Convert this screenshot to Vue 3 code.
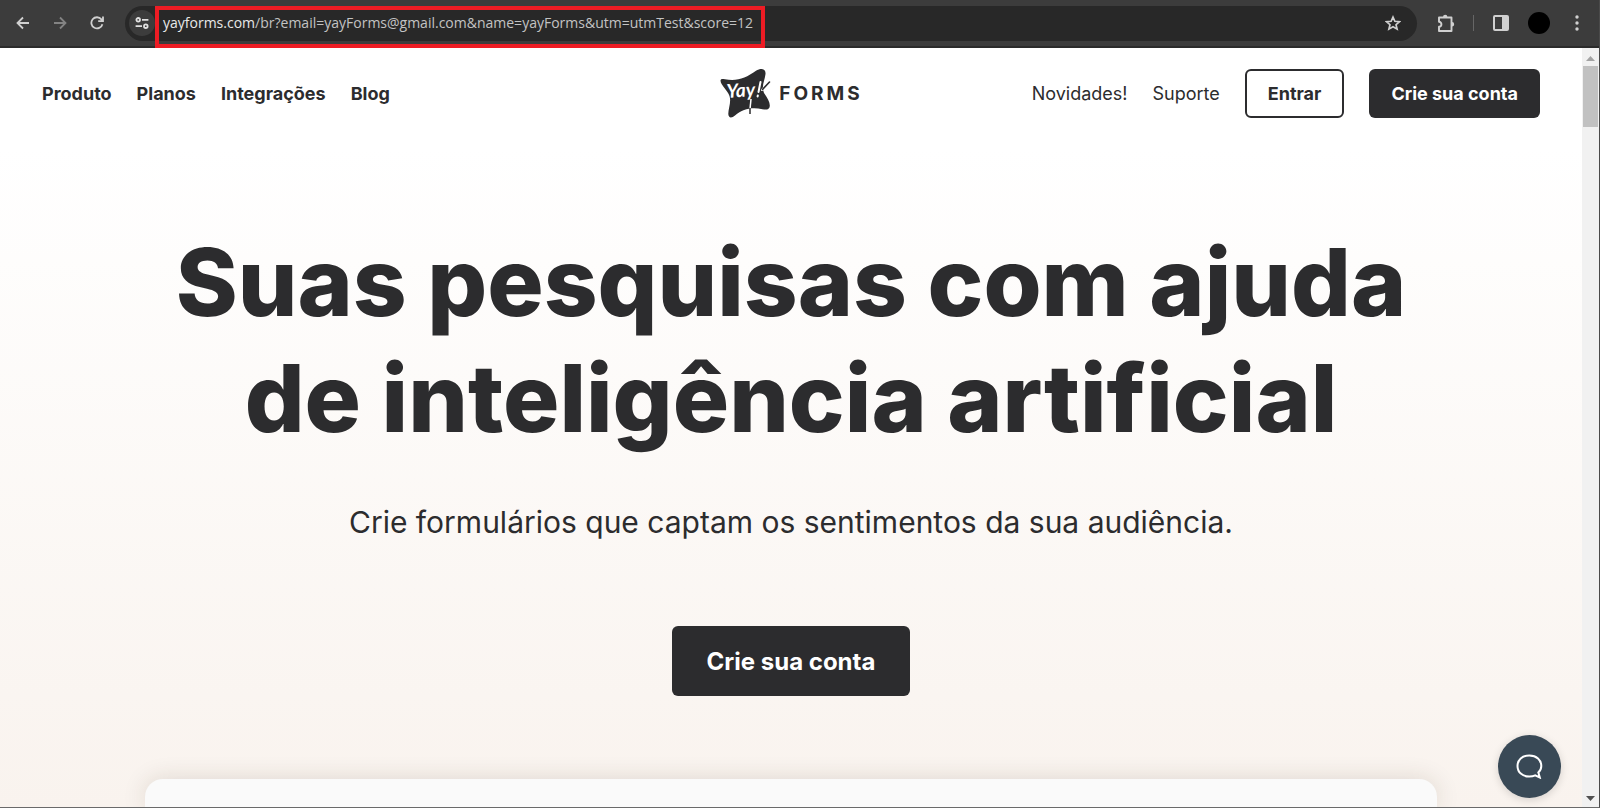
<script setup>
import { ref } from 'vue'

const address = 'yayforms.com'
const query = '/br?email=yayForms@gmail.com&name=yayForms&utm=utmTest&score=12'
const mainLinks = ref(['Produto', 'Planos', 'Integrações', 'Blog'])
const sideLinks = ref(['Novidades!', 'Suporte'])
</script>

<template>
  <div class="browser">
    <div class="toolbar">
      <button class="tool" aria-label="Voltar">
        <svg width="14" height="14" viewBox="0 0 14 14" fill="none" stroke="#d0d0d0" stroke-width="1.8"><path d="M13 7H2M7 1.5L1.5 7L7 12.5" /></svg>
      </button>
      <button class="tool" aria-label="Avançar">
        <svg width="14" height="14" viewBox="0 0 14 14" fill="none" stroke="#838383" stroke-width="1.8"><path d="M1 7H12M7 1.5L12.5 7L7 12.5" /></svg>
      </button>
      <button class="tool" aria-label="Recarregar">
        <svg width="14" height="14" viewBox="0 0 14 14" fill="none" stroke="#d0d0d0" stroke-width="1.8"><path d="M12.4 8.2A5.600 5.600 0 1 1 11.4 3.400L13 5M13 0.5V5.2H8.200" /></svg>
      </button>
      <div class="omnibox">
        <button class="site-info" aria-label="Informações do site">
          <svg width="14" height="12" viewBox="0 0 14 12" fill="none" stroke="#e0e0e0" stroke-width="1.8"><circle cx="3.2" cy="2.8" r="1.8" /><path d="M7 2.8H13.4M0.6 9.2H7" /><circle cx="10.8" cy="9.2" r="1.8" /></svg>
        </button>
        <div class="url"><span class="host">{{ address }}</span>{{ query }}</div>
        <button class="star" aria-label="Adicionar aos favoritos">
          <svg width="16" height="16" viewBox="0 0 18 17" fill="none" stroke="#d0d0d0" stroke-width="1.9"><path d="M9 1.8L11.1 6.5L16.3 7L12.4 10.4L13.6 15.4L9 12.7L4.4 15.4L5.6 10.4L1.7 7L6.9 6.5Z" /></svg>
        </button>
      </div>
      <button class="tool ext" aria-label="Extensões">
        <svg width="18" height="19" viewBox="0 0 18 19" fill="none" stroke="#d0d0d0" stroke-width="1.9"><path d="M2 3.5H14.5V17H2V12.8C5.2 12.8 5.2 7.8 2 7.8Z" stroke-linejoin="round" /><path d="M6 3A2.2 2.2 0 0 1 10.400 3ZM15 8A2.200 2.200 0 0 1 15 12.400Z" fill="#d0d0d0" stroke="none" /></svg>
      </button>
      <span class="divider"></span>
      <button class="tool panel" aria-label="Painel lateral">
        <svg width="16" height="16" viewBox="0 0 16 16"><rect x="1" y="1" width="14" height="14" rx="1" fill="none" stroke="#d0d0d0" stroke-width="2" /><path d="M9 1H15V15H9Z" fill="#d0d0d0" /></svg>
      </button>
      <button class="avatar" aria-label="Perfil"></button>
      <button class="tool more" aria-label="Mais">
        <svg width="4" height="16" viewBox="0 0 4 16" fill="#d0d0d0"><circle cx="2" cy="2" r="1.700" /><circle cx="2" cy="8" r="1.700" /><circle cx="2" cy="14" r="1.700" /></svg>
      </button>
    </div>

    <div class="viewport">
      <div class="page">
        <header class="header">
          <nav class="main-nav">
            <a v-for="link in mainLinks" :key="link" href="#">{{ link }}</a>
          </nav>
          <a class="brand" href="#">
            <svg width="52" height="50" viewBox="0 0 52 50">
              <path d="M1.500 12.500C1.800 10.500 4 10.800 6 11.200C18 13.500 27 10 37 2.800C42 -0.500 47 0.500 46.500 6C46 12 42 18 45 25C48.500 30 51 34 50.800 38C50.500 42 47 42 43.500 41.200C33 39 24 40.500 16 47.500C13 50 9.500 50.500 9.300 46C9.200 41 12.500 34 10.500 28C8.500 22 1.500 17 1.500 12.500Z" fill="#2c2c2e" />
              <text x="8" y="30" transform="rotate(-4 8 30)" class="script">Yay</text>
              <path d="M41.500 14L39.500 24M38.800 27.500L38.600 28.500M49 15L43 22" stroke="#fff" stroke-width="2" stroke-linecap="round" />
              <path d="M50.500 14L43.500 21.500" stroke="#2c2c2e" stroke-width="1.600" stroke-linecap="round" />
              <path d="M32 31L31 41" stroke="#fff" stroke-width="1.500" />
              <path d="M31 40V46" stroke="#2c2c2e" stroke-width="1.500" />
            </svg>
            <span class="wordmark">FORMS</span>
          </a>
          <nav class="side-nav">
            <a v-for="link in sideLinks" :key="link" href="#">{{ link }}</a>
            <button class="btn outline">Entrar</button>
            <button class="btn">Crie sua conta</button>
          </nav>
        </header>

        <main class="hero">
          <h1>Suas pesquisas com ajuda<br />de inteligência artificial</h1>
          <p>Crie formulários que captam os sentimentos da sua audiência.</p>
          <button class="btn large">Crie sua conta</button>
          <div class="preview"></div>
        </main>

        <button class="chat" aria-label="Abrir chat">
          <svg width="27" height="25" viewBox="0 0 27 25" fill="none" stroke="#fff" stroke-width="2"><path d="M22.300 18.400C24.400 16.600 25.300 14.400 25.300 12C25.300 5.700 20.500 1.500 13.300 1.500S1.500 5.700 1.500 12S6.300 22.500 13.300 22.500C15.600 22.500 17.500 22.100 19.200 21.300L23.800 23.500Z" /></svg>
        </button>
      </div>
      <div class="scrollbar">
        <svg width="9" height="5" viewBox="0 0 9 5"><path d="M0 5L4.500 0L9 5Z" fill="#a3a3a3" /></svg>
        <span class="thumb"></span>
        <svg class="down" width="9" height="5" viewBox="0 0 9 5"><path d="M0 0H9L4.500 5Z" fill="#505050" /></svg>
      </div>
    </div>
  </div>
</template>

<style>
body { margin: 0; background: #3c3c3c; }
</style>

<style scoped>
* { box-sizing: border-box; }
button { border: 0; padding: 0; background: none; font: inherit; color: inherit; cursor: pointer; }
a { color: inherit; text-decoration: none; }
svg { display: block; }

.browser {
  height: 100vh;
  display: flex;
  flex-direction: column;
  overflow: hidden;
  font-family: Inter, sans-serif;
  color: #2c2c2e;
  border-right: 1px solid #4a4a4a;
  border-bottom: 1px solid #6a6a6a;
}
.toolbar {
  flex: none;
  height: 48px;
  padding: 0 20px 0 16px;
  display: flex;
  align-items: center;
  background: #3c3c3c;
  border-bottom: 2px solid #2b2b2b;
}
.tool { flex: none; width: 14px; display: grid; place-items: center; margin-right: 23px; }
.omnibox {
  flex: 1;
  height: 35px;
  margin-right: 20px;
  margin-left: -2px;
  display: flex;
  align-items: center;
  padding: 0 16px 0 4px;
  border-radius: 18px;
  background: #282828;
}
.site-info { width: 26px; height: 26px; border-radius: 50%; background: #3c3c3c; display: grid; place-items: center; }
.url {
  position: relative;
  margin-left: 8px;
  font: 14px/22px "Open Sans", "Noto Sans", sans-serif;
  color: #c3c3c3;
  white-space: nowrap;
}
.url::after {
  content: "";
  position: absolute;
  inset: -6px -12px -14px -8px;
  border: 4px solid #ed1c24;
}
.host { color: #e8e8e8; }
.star { margin-left: auto; }
.ext { width: 18px; margin-right: 18px; }
.divider { width: 1px; height: 16px; background: #666; margin-right: 19px; }
.panel { width: 16px; margin-right: 19px; }
.avatar { flex: none; width: 22px; height: 22px; border-radius: 50%; background: #000; margin-right: 25px; }
.more { width: 4px; margin-right: 0; }

.viewport { flex: 1; min-height: 0; display: flex; }
.page {
  position: relative;
  flex: 1;
  display: flex;
  flex-direction: column;
  overflow: hidden;
  background: linear-gradient(#fff 100px, #f9f3ee 100%);
}
.header {
  display: grid;
  grid-template-columns: 1fr auto 1fr;
  align-items: center;
  padding: 20px 42px;
  font-size: 18px;
}
.main-nav { display: flex; gap: 25px; font-weight: 700; }
.side-nav { display: flex; gap: 25px; align-items: center; justify-content: flex-end; }
.brand { display: flex; align-items: center; gap: 8px; }
.script { font: italic 700 19px Lato, sans-serif; fill: #fff; }
.wordmark { font-size: 19px; font-weight: 700; letter-spacing: 3px; }
.btn {
  padding: 0 22px;
  height: 49px;
  border-radius: 6px;
  background: #2c2c2e;
  color: #fff;
  font-weight: 700;
  white-space: nowrap;
}
.outline { padding: 0 21px; border: 2px solid #2c2c2e; background: #fff; color: #2c2c2e; }

.hero { flex: 1; display: flex; flex-direction: column; align-items: center; padding-top: 86px; }
h1 { margin: 0; font-size: 94px; line-height: 116px; font-weight: 800; text-align: center; white-space: nowrap; }
p { margin: 42px 0 0; font-size: 30px; line-height: 48px; }
.large { margin-top: 80px; height: 70px; padding: 0 35px; font-size: 24px; }
.preview {
  flex: 1;
  width: calc(100% - 290px);
  margin-top: 83px;
  border-radius: 18px 18px 0 0;
  background: #fafafa;
  box-shadow: 0 0 24px rgba(60, 40, 20, 0.14);
}
.chat {
  position: absolute;
  right: 21px;
  bottom: 9px;
  width: 63px;
  height: 63px;
  border-radius: 50%;
  background: #394956;
  display: grid;
  place-items: center;
  box-shadow: 0 2px 8px rgba(0, 0, 0, 0.15);
}
.scrollbar {
  flex: none;
  width: 17px;
  display: flex;
  flex-direction: column;
  align-items: center;
  padding: 8px 0 6px;
  background: #f1f1f1;
}
.thumb { width: 15px; height: 61px; margin-top: 5px; background: #c1c1c1; }
.down { margin-top: auto; }
</style>
